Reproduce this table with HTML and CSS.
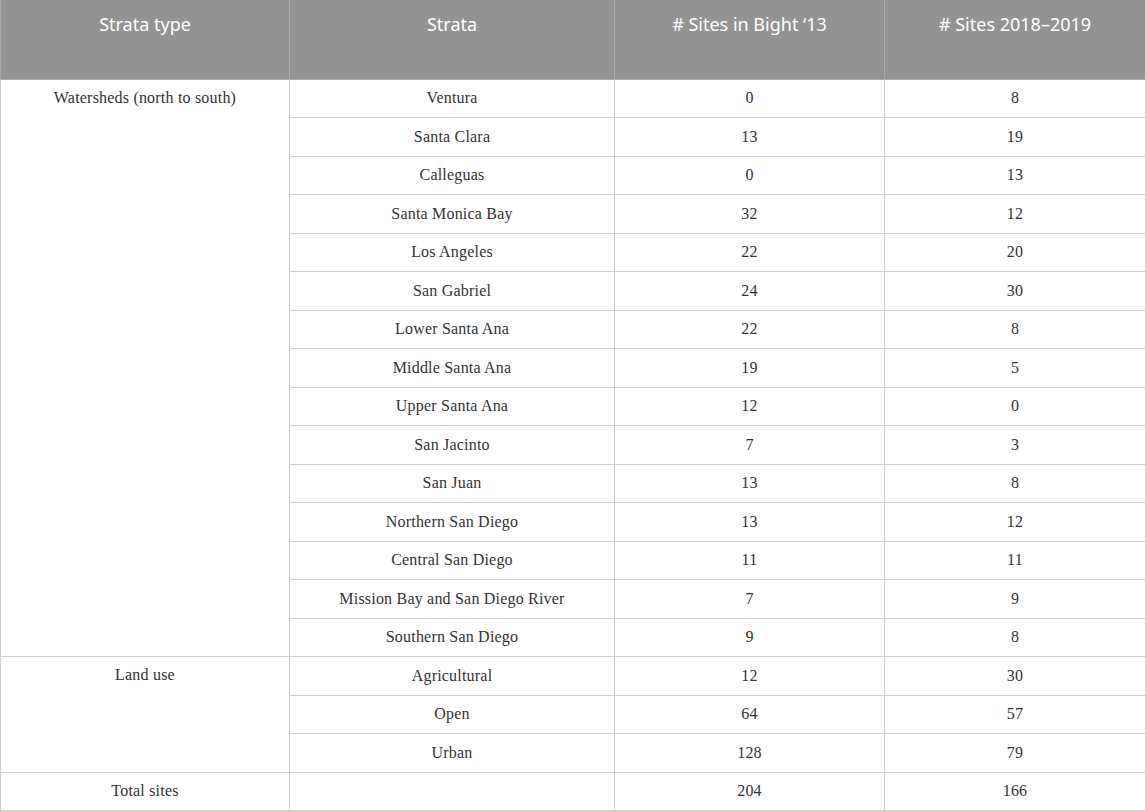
FILE: index.html
```html
<!DOCTYPE html>
<html>
<head>
<meta charset="utf-8">
<link rel="stylesheet" href="styles.css">
</head>
<body>
<table class="data">
<colgroup><col class="c1"><col class="c2"><col class="c3"><col class="c4"></colgroup>
<thead>
<tr><th>Strata type</th><th>Strata</th><th># Sites in Bight ‘13</th><th># Sites 2018–2019</th></tr>
</thead>
<tbody>
<tr><td class="group" rowspan="15">Watersheds (north to south)</td><td>Ventura</td><td>0</td><td>8</td></tr>
<tr><td>Santa Clara</td><td>13</td><td>19</td></tr>
<tr><td>Calleguas</td><td>0</td><td>13</td></tr>
<tr><td>Santa Monica Bay</td><td>32</td><td>12</td></tr>
<tr><td>Los Angeles</td><td>22</td><td>20</td></tr>
<tr><td>San Gabriel</td><td>24</td><td>30</td></tr>
<tr><td>Lower Santa Ana</td><td>22</td><td>8</td></tr>
<tr><td>Middle Santa Ana</td><td>19</td><td>5</td></tr>
<tr><td>Upper Santa Ana</td><td>12</td><td>0</td></tr>
<tr><td>San Jacinto</td><td>7</td><td>3</td></tr>
<tr><td>San Juan</td><td>13</td><td>8</td></tr>
<tr><td>Northern San Diego</td><td>13</td><td>12</td></tr>
<tr><td>Central San Diego</td><td>11</td><td>11</td></tr>
<tr><td>Mission Bay and San Diego River</td><td>7</td><td>9</td></tr>
<tr><td>Southern San Diego</td><td>9</td><td>8</td></tr>
<tr><td class="group" rowspan="3">Land use</td><td>Agricultural</td><td>12</td><td>30</td></tr>
<tr><td>Open</td><td>64</td><td>57</td></tr>
<tr><td>Urban</td><td>128</td><td>79</td></tr>
<tr><td>Total sites</td><td></td><td>204</td><td>166</td></tr>
</tbody>
</table>
</body>
</html>
```
FILE: styles.css
```css
html, body {
  margin: 0;
  padding: 0;
  background: #fff;
}
.data {
  width: 1145px;
  border-collapse: collapse;
  table-layout: fixed;
}
.c1 { width: 289px; }
.c2 { width: 325px; }
.c3 { width: 270px; }
.c4 { width: 261px; }
.data th {
  background: #939393;
  color: #fff;
  font-family: "Noto Sans", "Open Sans", sans-serif;
  font-weight: 400;
  font-size: 18px;
  line-height: 24px;
  height: 79px;
  box-sizing: border-box;
  padding: 12px 8px 0;
  vertical-align: top;
  text-align: center;
  border: 1px solid #a8a8a8;
  border-top: none;
}
.data td {
  font-family: "Liberation Serif", "Times New Roman", serif;
  font-size: 16px;
  letter-spacing: 0.2px;
  color: #333;
  text-align: center;
  vertical-align: middle;
  height: 38.5px;
  box-sizing: border-box;
  padding: 0 8px;
  border: 1px solid #cfcfcf;
}
.data td.group {
  vertical-align: top;
  padding-top: 9px;
}
```
